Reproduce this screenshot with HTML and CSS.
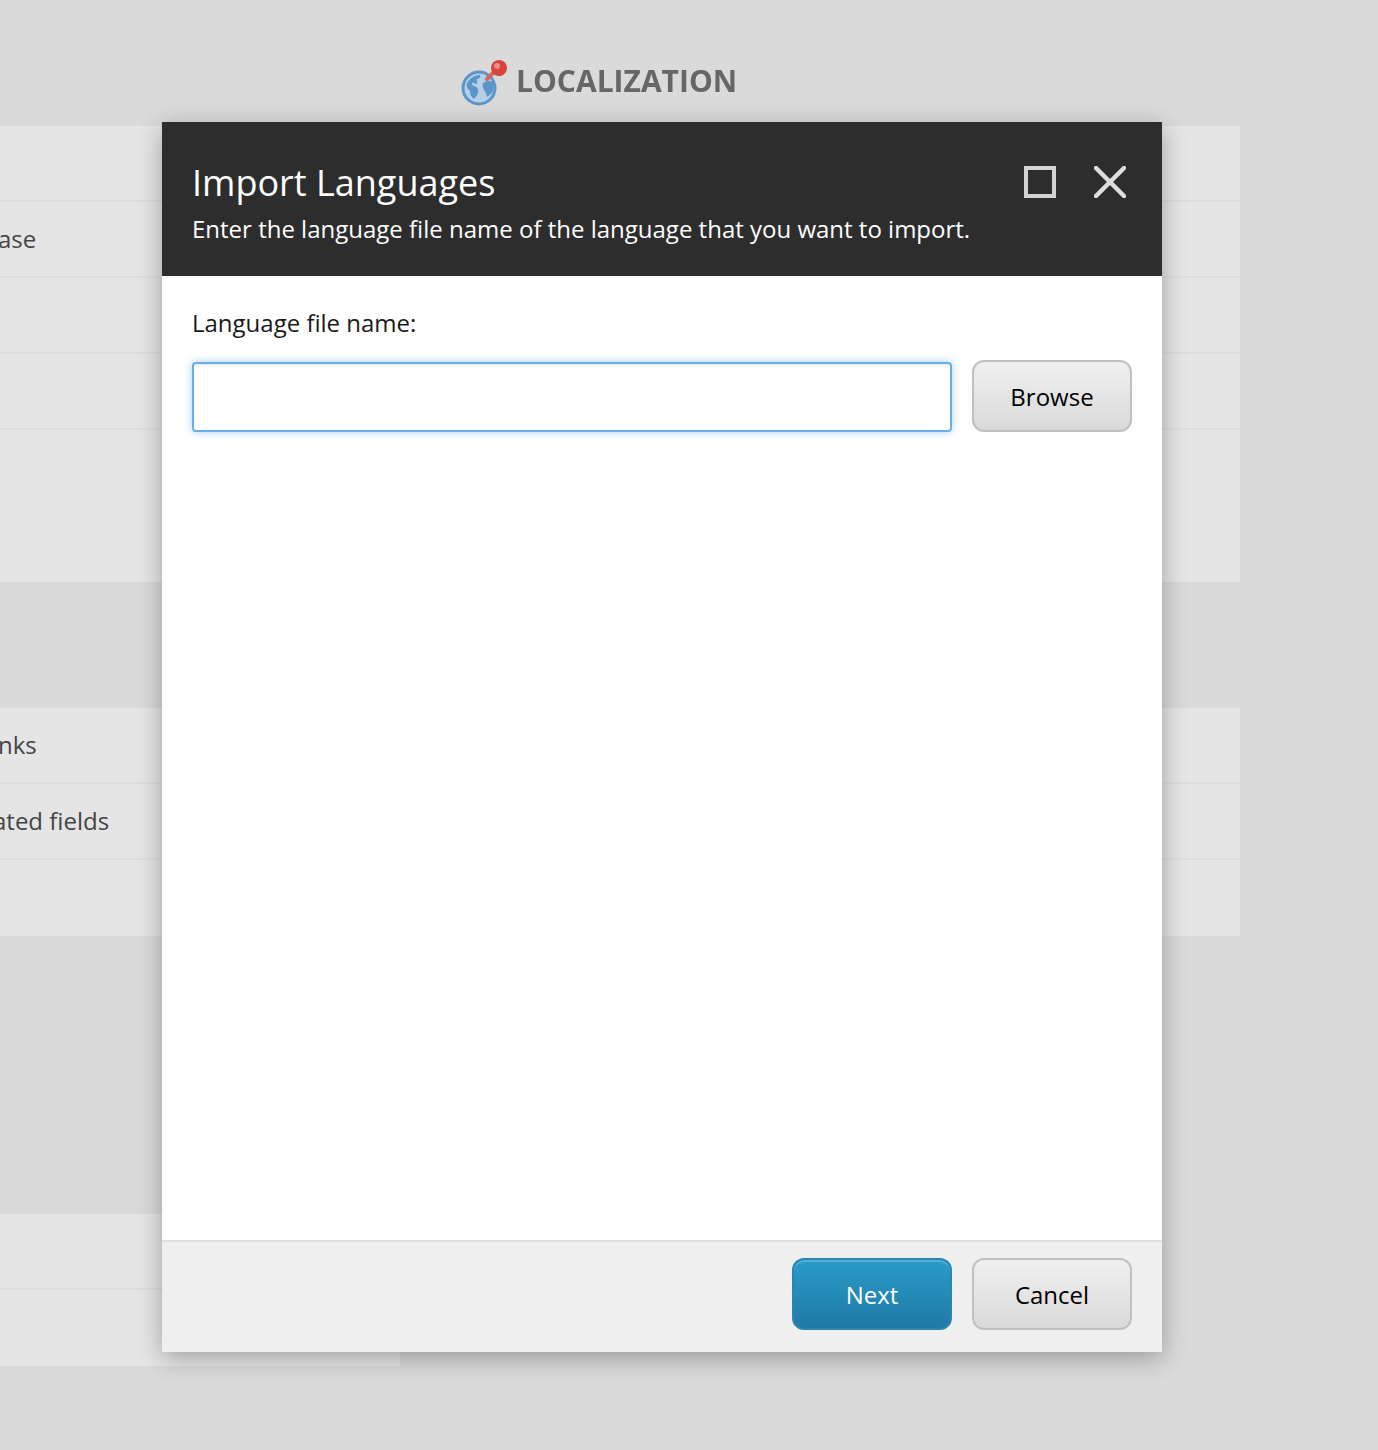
FILE: index.html
```html
<!DOCTYPE html>
<html lang="en">
  <head>
    <meta charset="UTF-8" />
    <meta name="viewport" content="width=device-width, initial-scale=1.0" />
    <title>Import Languages</title>
    <link rel="stylesheet" href="styles.css">
  </head>
  <body>
    <div class="page">
      <div class="page-heading">
        <svg class="heading-icon" width="50" height="50" viewBox="0 0 50 50">
          <circle cx="20" cy="30" r="16" fill="#b4cfe6" stroke="#5c96c9" stroke-width="3" />
          <path d="M8 25c3-5 8-8 13-8 1 2-1 4-3 4-1 2 1 3 0 5-2 0-3-2-5-1-1 2 2 3 4 4 2 2 3 3 2 6-1 3-3 4-4 6-3-2-4-5-4-8-2-2-4-4-3-8z" fill="#5c96c9" />
          <path d="M24 25c3-2 7-3 10-1 1 3 1 7-1 11-2 1-3 3-5 4-1-3-1-5-3-7-1-2-2-5-1-7z" fill="#5c96c9" />
          <path d="M28 21l9-9" stroke="#d9645c" stroke-width="4" stroke-linecap="round" />
          <circle cx="40" cy="10" r="8" fill="#d8443c" />
          <circle cx="38" cy="8" r="3" fill="#ec8f88" />
        </svg>
        <h2>LOCALIZATION</h2>
      </div>

      <div class="tile-group">
        <div class="tile"></div>
        <div class="tile"><span class="tile-text">ase</span></div>
        <div class="tile"></div>
        <div class="tile"></div>
        <div class="tile tile-tall"></div>
      </div>

      <div class="tile-group group-links">
        <div class="tile"><span class="tile-text">nks</span></div>
        <div class="tile"><span class="tile-text tile-text-long">ated fields</span></div>
        <div class="tile"></div>
      </div>

      <div class="tile-group group-short">
        <div class="tile"></div>
        <div class="tile"></div>
      </div>
    </div>

    <div class="dialog">
      <div class="dialog-header">
        <div class="dialog-titles">
          <h1>Import Languages</h1>
          <p>Enter the language file name of the language that you want to import.</p>
        </div>
        <div class="dialog-actions">
          <svg width="32" height="32" viewBox="0 0 32 32">
            <rect x="2" y="2" width="28" height="28" fill="none" stroke="#d4d4d4" stroke-width="4" />
          </svg>
          <svg width="32" height="32" viewBox="0 0 32 32">
            <path d="M2 2L30 30M30 2L2 30" fill="none" stroke="#dedede" stroke-width="4.5" stroke-linecap="round" />
          </svg>
        </div>
      </div>

      <div class="dialog-body">
        <label for="fileName">Language file name:</label>
        <div class="file-row">
          <input type="text" id="fileName" />
          <button type="button" class="btn">Browse</button>
        </div>
      </div>

      <div class="dialog-footer">
        <button type="button" class="btn btn-primary">Next</button>
        <button type="button" class="btn">Cancel</button>
      </div>
    </div>
  </body>
</html>
```

FILE: styles.css
```css
html,
body {
  margin: 0;
  height: 1450px;
  overflow: hidden;
}

body {
  font-family: "Open Sans", "Noto Sans", sans-serif;
  background-color: #dadada;
  color: #000;
  position: relative;
}

.page {
  width: 1240px;
}

.page-heading {
  display: flex;
  align-items: center;
  height: 126px;
  box-sizing: border-box;
  padding: 44px 0 0 459px;
  gap: 7px;
}

.heading-icon {
  display: block;
  margin-top: -4px;
  filter: blur(0.5px);
}

.page-heading h2 {
  margin: 0;
  font-size: 30px;
  font-weight: 700;
  color: #666;
  filter: blur(0.4px);
  margin-top: -10px;
}

.tile-group {
  margin-bottom: 126px;
}

.group-links {
  margin-bottom: 278px;
}

.group-short {
  width: 400px;
  margin-bottom: 0;
}

.tile {
  height: 74px;
  background-color: #e5e5e5;
  border-bottom: 2px solid #dedede;
  display: flex;
  align-items: center;
  justify-content: flex-start;
}

.tile:last-child {
  border-bottom: none;
  height: 76px;
}

.tile-tall:last-child {
  height: 152px;
}

.tile-text {
  font-size: 24px;
  line-height: 32px;
  color: #444;
  margin-left: -2px;
}

.tile-text-long {
  margin-left: -7px;
}

.dialog {
  position: absolute;
  left: 162px;
  top: 122px;
  width: 1000px;
  height: 1230px;
  display: flex;
  flex-direction: column;
  background: white;
  box-shadow: 0 6px 24px rgba(0, 0, 0, 0.3);
}

.dialog-header {
  height: 154px;
  box-sizing: border-box;
  padding: 36px 36px 0 30px;
  background-color: #2d2d2d;
  color: white;
  display: flex;
  justify-content: space-between;
  flex-shrink: 0;
}

.dialog-titles h1 {
  margin: 0;
  font-size: 36px;
  font-weight: 400;
  line-height: 50px;
}

.dialog-titles p {
  margin: 0;
  font-size: 24px;
  line-height: 42px;
}

.dialog-actions {
  display: flex;
  gap: 38px;
  padding-top: 8px;
}

.dialog-body {
  flex: 1;
  padding: 29px 30px 0;
}

label {
  display: block;
  font-size: 24px;
  line-height: 36px;
  color: #1a1a1a;
}

.file-row {
  display: flex;
  align-items: flex-end;
  gap: 20px;
  margin-top: 19px;
}

input {
  flex: 1;
  height: 70px;
  box-sizing: border-box;
  border: 2px solid #66afe9;
  border-radius: 4px;
  outline: none;
  box-shadow: 0 0 8px rgba(102, 175, 233, 0.6), inset 0 2px 2px rgba(0, 0, 0, 0.07);
}

.btn {
  width: 160px;
  height: 72px;
  box-sizing: border-box;
  font-family: inherit;
  font-size: 24px;
  color: #000;
  border: 2px solid #c0c0c0;
  border-radius: 12px;
  background: linear-gradient(#f0f0f0, #d9d9d9);
  cursor: pointer;
  padding: 0;
}

.btn-primary {
  color: white;
  border-color: #2a86b0;
  background: linear-gradient(#2a9bcb, #1f7aa3);
  box-shadow: inset 0 2px 0 rgba(255, 255, 255, 0.2);
}

.dialog-footer {
  height: 112px;
  box-sizing: border-box;
  padding: 16px 30px 0;
  background-color: #efefef;
  border-top: 2px solid #e0e0e0;
  display: flex;
  justify-content: flex-end;
  gap: 20px;
  flex-shrink: 0;
}
```
